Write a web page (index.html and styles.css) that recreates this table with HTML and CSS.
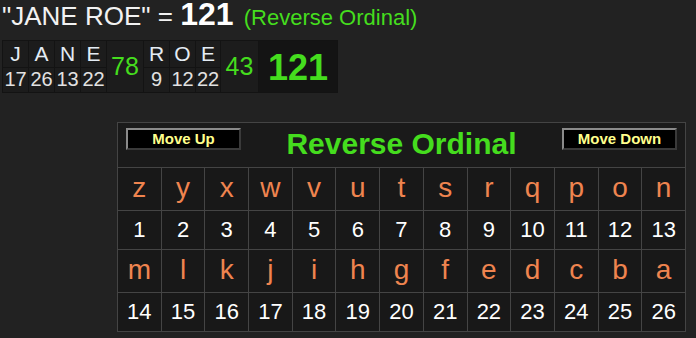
FILE: index.html
```html
<!DOCTYPE html>
<html lang="en">
<head>
<meta charset="utf-8">
<title>JANE ROE = 121 (Reverse Ordinal)</title>
<link rel="stylesheet" href="styles.css">
</head>
<body>
<div class="headline">"JANE ROE" = <b class="total">121</b> <span class="cipher">(Reverse Ordinal)</span></div>

<div class="breakdown">
  <div class="ltr">J</div><div class="ltr">A</div><div class="ltr">N</div><div class="ltr">E</div>
  <div class="word-sum">78</div>
  <div class="ltr">R</div><div class="ltr">O</div><div class="ltr">E</div>
  <div class="word-sum">43</div>
  <div class="grand">121</div>
  <div class="val">17</div><div class="val">26</div><div class="val">13</div><div class="val">22</div>
  <div class="val">9</div><div class="val">12</div><div class="val">22</div>
</div>

<div class="board">
  <div class="board-head">
    <button class="nav-btn">Move Up</button>
    <div class="board-title">Reverse Ordinal</div>
    <button class="nav-btn">Move Down</button>
  </div>
  <div class="c l">z</div><div class="c l">y</div><div class="c l">x</div><div class="c l">w</div><div class="c l">v</div><div class="c l">u</div><div class="c l">t</div><div class="c l">s</div><div class="c l">r</div><div class="c l">q</div><div class="c l">p</div><div class="c l">o</div><div class="c l">n</div>
  <div class="c n">1</div><div class="c n">2</div><div class="c n">3</div><div class="c n">4</div><div class="c n">5</div><div class="c n">6</div><div class="c n">7</div><div class="c n">8</div><div class="c n">9</div><div class="c n">10</div><div class="c n">11</div><div class="c n">12</div><div class="c n">13</div>
  <div class="c l">m</div><div class="c l">l</div><div class="c l">k</div><div class="c l">j</div><div class="c l">i</div><div class="c l">h</div><div class="c l">g</div><div class="c l">f</div><div class="c l">e</div><div class="c l">d</div><div class="c l">c</div><div class="c l">b</div><div class="c l">a</div>
  <div class="c n">14</div><div class="c n">15</div><div class="c n">16</div><div class="c n">17</div><div class="c n">18</div><div class="c n">19</div><div class="c n">20</div><div class="c n">21</div><div class="c n">22</div><div class="c n">23</div><div class="c n">24</div><div class="c n">25</div><div class="c n">26</div>
</div>
</body>
</html>
```

FILE: styles.css
```css
html, body {
  margin: 0;
  padding: 0;
}

body {
  background: #222222;
  color: #ffffff;
  font-family: "Liberation Sans", Arial, sans-serif;
  width: 696px;
  height: 338px;
  overflow: hidden;
}

.headline {
  font-size: 26px;
  line-height: 28px;
  padding-left: 2px;
  white-space: nowrap;
  color: #f2f2f2;
}

.total {
  font-size: 32px;
  font-weight: bold;
  color: #ffffff;
}

.cipher {
  margin-left: 3px;
  font-size: 22px;
  color: #45dd1e;
}

.breakdown {
  margin: 8px 0 0 2px;
  display: grid;
  width: max-content;
  grid-template-columns: 25px 25px 25px 25px 36px 25px 25px 24px 37px 78px;
  grid-template-rows: 26px 24px;
  gap: 1px;
  padding: 1px;
  background: #131313;
}

.ltr {
  background: #1c1c1c;
  color: #e4ecf4;
  font-size: 21px;
  line-height: 26px;
  text-align: center;
}

.val {
  background: #1c1c1c;
  color: #e2e2e2;
  font-size: 20px;
  line-height: 22px;
  text-align: center;
}

.word-sum {
  grid-row: span 2;
  background: #1c1c1c;
  color: #45dd1e;
  font-size: 25px;
  display: flex;
  align-items: center;
  justify-content: center;
}

.grand {
  grid-row: span 2;
  background: #141414;
  color: #45dd1e;
  font-size: 36px;
  font-weight: bold;
  display: flex;
  align-items: center;
  justify-content: center;
  padding-top: 2px;
}

.board {
  margin: 29px 0 0 117px;
  width: 569px;
  box-sizing: border-box;
  display: grid;
  grid-template-columns: repeat(13, 1fr);
  grid-template-rows: 44px 42px 38px 42px 38px;
  gap: 1px;
  border: 1px solid #444444;
  background: #444444;
}

.board-head {
  grid-column: 1 / -1;
  background: #1a1a1a;
  display: flex;
  justify-content: space-between;
  align-items: flex-start;
  padding: 5px 8px;
}

.nav-btn {
  width: 115px;
  height: 22px;
  box-sizing: border-box;
  margin: 0;
  padding: 0;
  border: 2px solid;
  border-color: #8a8a8a #3a3a3a #3a3a3a #8a8a8a;
  background: #000000;
  color: #ffff8c;
  font-family: "Liberation Sans", Arial, sans-serif;
  font-size: 15px;
  font-weight: bold;
  line-height: 18px;
  text-align: center;
}

.board-title {
  margin-top: 0;
  font-size: 30px;
  line-height: 32px;
  font-weight: bold;
  color: #45dd1e;
}

.c {
  background: #181818;
  text-align: center;
}

.l {
  color: #ef844f;
  font-size: 28px;
  line-height: 40px;
}

.n {
  color: #ffffff;
  font-size: 22px;
  line-height: 38px;
}
```
